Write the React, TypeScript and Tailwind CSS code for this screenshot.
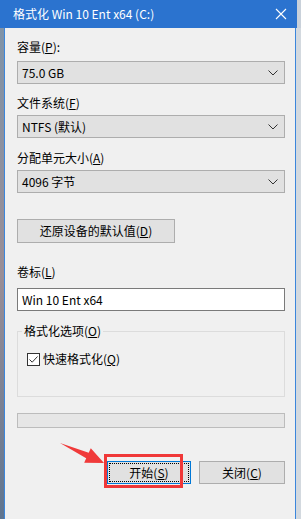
import React from "react";

const font = { fontFamily: '"Noto Sans CJK SC", "Noto Sans", sans-serif' };

function Chevron() {
  return (
    <svg width="10" height="6" viewBox="0 0 10 6" className="shrink-0">
      <path d="M0.5 0.5 L5 5 L9.5 0.5" fill="none" stroke="#333" strokeWidth="1" />
    </svg>
  );
}

function Label({ children, className = "" }: { children: React.ReactNode; className?: string }) {
  return <div className={`h-[16px] text-[12px] leading-[16px] text-black ${className}`}>{children}</div>;
}

function Combo({ value, className = "" }: { value: string; className?: string }) {
  return (
    <div
      className={`flex h-[23px] items-center justify-between border border-[#adadad] bg-[#e1e1e1] pl-[4px] pr-[6px] text-[12px] text-black ${className}`}
    >
      <span>{value}</span>
      <Chevron />
    </div>
  );
}

export default function App() {
  return (
    <div className="relative flex h-[519px] w-[301px] flex-col overflow-hidden bg-[#c9d1da]" style={font}>
      {/* title bar */}
      <div className="flex h-[28px] w-[297px] shrink-0 items-center justify-between bg-[#2b73cf] pl-[13px] pr-[10px] text-[12px] text-white">
        <span>格式化 Win 10 Ent x64 (C:)</span>
        <svg width="12" height="12" viewBox="0 0 12 12">
          <path d="M1 1 L11 11 M11 1 L1 11" stroke="#fff" strokeWidth="1.1" />
        </svg>
      </div>

      <div className="flex flex-1">
        <div className="w-[4px] bg-gradient-to-b from-[#7f93a8] via-[#9a8e96] to-[#5f7590]" />
        <div className="w-[292px] border-x border-[#3b86dc] bg-[#f0f0f0] pl-[12px] pr-[10px] pt-[11px]">
          <Label>
            容量(<u>P</u>):
          </Label>
          <Combo value="75.0 GB" className="mt-[6px]" />

          <Label className="mt-[11px]">
            文件系统(<u>F</u>)
          </Label>
          <Combo value="NTFS (默认)" className="mt-[4px]" />

          <Label className="mt-[12px]">
            分配单元大小(<u>A</u>)
          </Label>
          <Combo value="4096 字节" className="mt-[4px]" />

          <div className="mt-[26px] flex h-[24px] w-[158px] items-center justify-center border border-[#adadad] bg-[#e1e1e1] text-[12px] text-black">
            还原设备的默认值(<u>D</u>)
          </div>

          <Label className="mt-[21px]">
            卷标(<u>L</u>)
          </Label>
          <div className="mt-[8px] flex h-[23px] items-center border border-[#7a7a7a] bg-white pl-[4px] text-[12px] text-black">
            Win 10 Ent x64
          </div>

          <div className="relative mt-[20px] h-[66px] border border-[#dcdcdc] pl-[9px] pt-[19px]">
            <span className="absolute left-[4px] top-[-9px] bg-[#f0f0f0] px-[2px] text-[12px] leading-[16px] text-black">
              格式化选项(<u>O</u>)
            </span>
            <div className="flex items-center gap-[3px] text-[12px] leading-[16px] text-black">
              <div className="flex h-[13px] w-[13px] items-center justify-center border border-[#333] bg-white">
                <svg width="11" height="11" viewBox="0 0 11 11">
                  <path d="M1.5 5.5 L4.2 8.2 L9.5 2.5" fill="none" stroke="#333" strokeWidth="1" />
                </svg>
              </div>
              <span>
                快速格式化(<u>Q</u>)
              </span>
            </div>
          </div>

          <div className="mt-[16px] h-[15px] border border-[#bcbcbc] bg-[#e6e6e6]" />

          <div className="mt-[33px] flex justify-end gap-[8px]">
            <div className="relative flex h-[23px] w-[84px] items-center justify-center border border-[#0078d7] bg-[#e1e1e1] p-[1px] text-[12px] text-black">
              <div className="flex h-full w-full items-center justify-center border border-dotted border-black">
                开始(<u>S</u>)
              </div>
              <div className="pointer-events-none absolute left-[-4px] top-[-8px] h-[34px] w-[79px] border-[3px] border-[#f03838]" />
            </div>
            <div className="flex h-[23px] w-[86px] items-center justify-center border border-[#adadad] bg-[#e1e1e1] text-[12px] text-black">
              关闭(<u>C</u>)
            </div>
          </div>
        </div>
        <div className="flex-1 bg-[#d3d9df]" />
      </div>

      {/* red arrow annotation */}
      <svg className="pointer-events-none absolute left-0 top-0" width="301" height="519">
        <polygon points="60,443 88.7,452.8 90.8,448.2 104,463 84.2,462.8 86.2,458.2" fill="#f03a3a" />
      </svg>
    </div>
  );
}
